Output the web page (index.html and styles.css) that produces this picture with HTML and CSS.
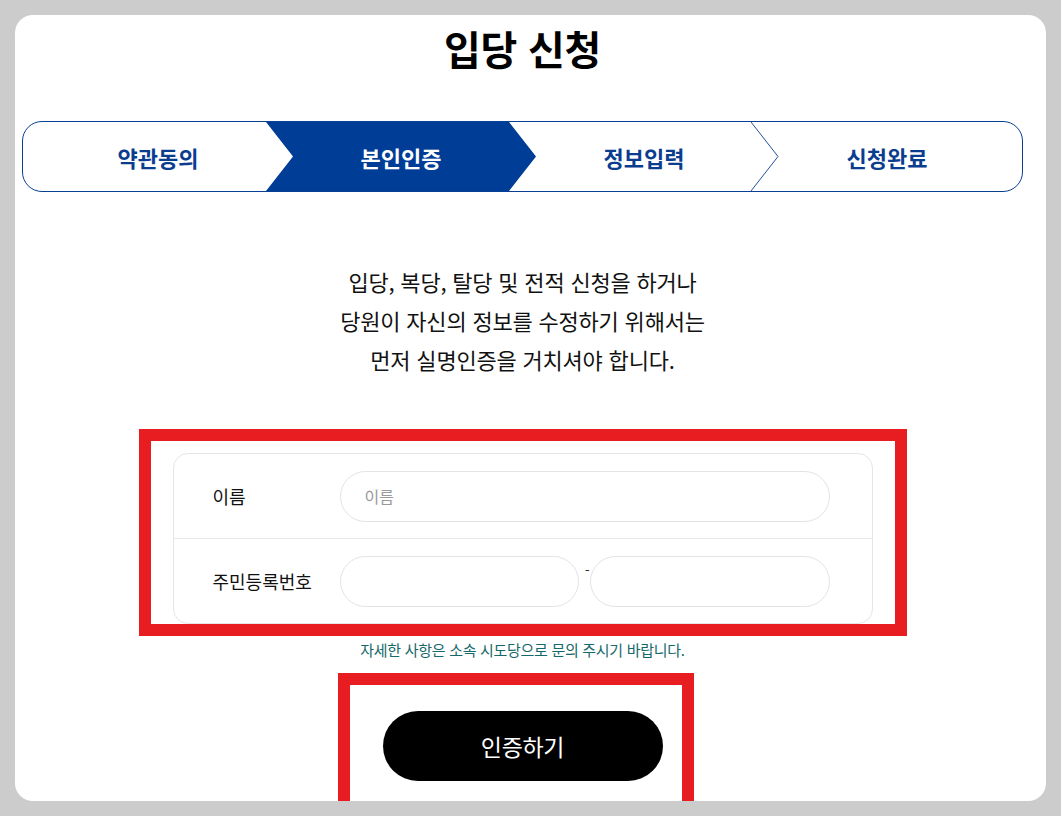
FILE: index.html
```html
<!DOCTYPE html>
<html lang="ko">
<head>
<meta charset="utf-8">
<title>입당 신청</title>
<link rel="stylesheet" href="styles.css">
</head>
<body>
<div class="card">
  <h1 class="title">입당 신청</h1>
  <ol class="steps">
    <li class="step">약관동의</li>
    <li class="step active">본인인증</li>
    <li class="step">정보입력<svg class="chev" viewBox="0 0 28 69" preserveAspectRatio="none"><polyline points="0,0 27,34.5 0,69" fill="none" stroke="#1f4f9f" stroke-width="1" vector-effect="non-scaling-stroke"/></svg></li>
    <li class="step">신청완료</li>
  </ol>
  <p class="lead">입당, 복당, 탈당 및 전적 신청을 하거나<br>당원이 자신의 정보를 수정하기 위해서는<br>먼저 실명인증을 거치셔야 합니다.</p>
  <div class="form-card">
    <div class="row row-first">
      <label class="label">이름</label>
      <input class="field field-wide" type="text" placeholder="이름">
    </div>
    <div class="row">
      <label class="label">주민등록번호</label>
      <div class="pair">
        <input class="field field-half" type="text">
        <span class="dash">-</span>
        <input class="field field-half2" type="password">
      </div>
    </div>
  </div>
  <p class="note">자세한 사항은 소속 시도당으로 문의 주시기 바랍니다.</p>
  <button class="submit" type="button">인증하기</button>
  <div class="mark mark-form"></div>
  <div class="mark mark-btn"></div>
</div>
</body>
</html>
```

FILE: styles.css
```css
html {
  overflow: hidden;
}
body {
  margin: 0;
  background: #cccccc;
  font-family: "Noto Sans CJK KR", "Noto Sans", sans-serif;
  color: #111;
}
.card {
  position: relative;
  margin: 15px 0 0 15px;
  width: 1031px;
  height: 786px;
  box-sizing: border-box;
  padding: 10px 23px 0 7px;
  background: #fff;
  border-radius: 18px;
}
.title {
  margin: 0;
  font-size: 40px;
  line-height: 46px;
  font-weight: 700;
  text-align: center;
  letter-spacing: -0.3px;
  color: #000;
}
.steps {
  display: flex;
  margin: 50px 0 0;
  padding: 0;
  list-style: none;
  height: 71px;
  box-sizing: border-box;
  border: 1px solid #073f95;
  border-radius: 20px;
  overflow: hidden;
}
.step {
  position: relative;
  flex: 0 0 270px;
  display: flex;
  align-items: center;
  justify-content: center;
  font-size: 22px;
  font-weight: 700;
  letter-spacing: 0;
  color: #0b3d8f;
}
.step + .step {
  margin-left: -27px;
}
.step.active {
  background: #003d96;
  color: #fff;
  clip-path: polygon(0 0, calc(100% - 27px) 0, 100% 50%, calc(100% - 27px) 100%, 0 100%, 27px 50%);
}
.chev {
  position: absolute;
  right: 0;
  top: 0;
  width: 28px;
  height: 100%;
}
.lead {
  margin: 70px 0 0;
  font-size: 22px;
  line-height: 39px;
  text-align: center;
  letter-spacing: -0.2px;
  color: #111;
}
.form-card {
  margin: 74px auto 0;
  width: 700px;
  box-sizing: border-box;
  border: 1px solid #e6e6e6;
  border-radius: 15px;
}
.row {
  display: flex;
  align-items: center;
  height: 84px;
  padding: 0 40px 0 39px;
}
.row-first {
  border-bottom: 1px solid #e8e8e8;
}
.label {
  flex: 0 0 127px;
  font-size: 18px;
  letter-spacing: 0;
  color: #111;
}
.field {
  box-sizing: border-box;
  height: 51px;
  border: 1px solid #e3e3e3;
  border-radius: 26px;
  background: #fff;
  padding: 0 24px;
  font-family: "Noto Sans CJK KR", "Noto Sans", sans-serif;
  font-size: 16px;
  color: #111;
  outline: none;
}
.field::placeholder {
  color: #9a9a9a;
}
.field-wide {
  width: 490px;
}
.pair {
  display: flex;
  align-items: flex-start;
  width: 490px;
}
.field-half {
  width: 239px;
}
.field-half2 {
  width: 240px;
}
.dash {
  flex: 0 0 11px;
  box-sizing: border-box;
  margin-top: 7px;
  padding-right: 0;
  font-size: 13px;
  line-height: 13px;
  text-align: right;
  color: #222;
}
.note {
  margin: 16px 0 0;
  font-size: 15px;
  line-height: 20px;
  text-align: center;
  letter-spacing: -0.3px;
  color: #15696b;
}
.submit {
  display: block;
  margin: 51px auto 0;
  width: 280px;
  height: 70px;
  border: none;
  border-radius: 35px;
  background: #000;
  color: #fff;
  font-family: "Noto Sans CJK KR", "Noto Sans", sans-serif;
  font-size: 23px;
  letter-spacing: -0.3px;
}
.mark {
  position: absolute;
  box-sizing: border-box;
  border: 12px solid #e71d21;
}
.mark-form {
  left: 124px;
  top: 414px;
  width: 768px;
  height: 207px;
}
.mark-btn {
  left: 323px;
  top: 658px;
  width: 356px;
  height: 190px;
  border-image: linear-gradient(to bottom, #e71d21 0, #e71d21 128px, #b9181b 128px, #b9181b 100%) 12;
}
```
